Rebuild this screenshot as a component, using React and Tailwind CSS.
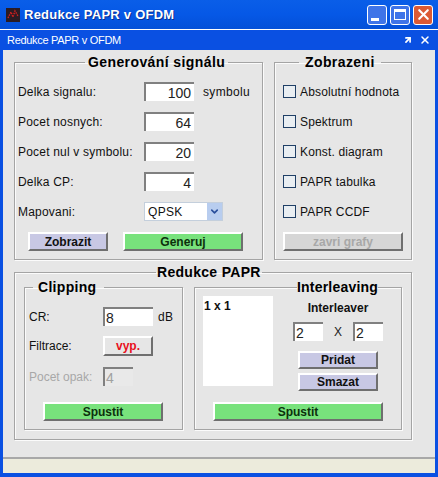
import { ArrowUpRight, ChevronDown, X } from "lucide-react";

const SANS = { fontFamily: '"Liberation Sans", Arial, sans-serif' };

function Group({ title, legendClass = "", className = "", children }) {
  return (
    <fieldset
      className={`min-w-0 border border-[#a4a4a4] shadow-[inset_1px_1px_0_#fbfbfb,1px_1px_0_#fbfbfb] ${className}`}
    >
      <legend className={`text-[14px] font-bold text-black ${legendClass}`}>{title}</legend>
      {children}
    </fieldset>
  );
}

function Field({ value, left, disabled, className = "w-[50px]" }) {
  return (
    <div
      className={`flex h-[19px] items-center border-t-2 border-l-2 border-t-[#808080] border-l-[#808080] text-[14px] leading-none ${
        left ? "justify-start pl-px" : "justify-end pr-[3px]"
      } ${disabled ? "bg-[#e9e9e9] text-[#a0a0a0]" : "bg-white text-[#222]"} ${className}`}
    >
      {value}
    </div>
  );
}

function Btn({ children, className = "" }) {
  return (
    <button
      className={`flex items-center justify-center border-2 border-t-white border-l-white border-r-[#6f6f6f] border-b-[#6f6f6f] text-[12px] leading-none font-bold ${className}`}
    >
      {children}
    </button>
  );
}

function Row({ label, children }) {
  return (
    <div className="flex h-[19px] items-center">
      <span className="w-[126px] text-[12px] tracking-[0.2px] text-[#111]">{label}</span>
      {children}
    </div>
  );
}

function Check({ label }) {
  return (
    <div className="flex h-[19px] items-center gap-[4px]">
      <span className="h-[13px] w-[13px] border border-[#1f3f66] bg-[#e9eef2]" />
      <span className="text-[12px] tracking-[0.15px] text-[#111]">{label}</span>
    </div>
  );
}

function WinButton({ className = "", children }) {
  return (
    <div
      className={`flex h-[20px] w-[20px] items-center justify-center rounded-[3px] border border-white ${className}`}
    >
      {children}
    </div>
  );
}

export default function App() {
  return (
    <div
      className="flex h-[477px] w-[438px] flex-col overflow-hidden bg-[#0a50e2]"
      style={SANS}
    >
      {/* Title bar */}
      <div className="flex h-[29px] items-center bg-gradient-to-b from-[#0a5ee8] via-[#0658e6] to-[#0450d8] pr-[5px] pl-[6px]">
        <svg width="14" height="14" viewBox="0 0 14 14" className="mr-[4px]">
          <rect width="14" height="14" fill="#2a1c24" />
          <path d="M2 10 L5 4 L7 9 L9 3 L12 8" stroke="#d02020" strokeWidth="1.4" strokeDasharray="1.5 1" fill="none" />
        </svg>
        <span className="text-[13px] font-bold tracking-[0.25px] text-white [text-shadow:1px_1px_0_#0a2f90]">
          Redukce PAPR v OFDM
        </span>
        <div className="ml-auto flex gap-[3px]">
          <WinButton className="items-end bg-[#3f74e8] pb-[3px]">
            <div className="mr-[4px] h-[3px] w-[8px] bg-white" />
          </WinButton>
          <WinButton className="bg-[#3f74e8]">
            <div className="h-[11px] w-[12px] border border-t-[3px] border-white" />
          </WinButton>
          <WinButton className="bg-[#dc5a34]">
            <X size={17} strokeWidth={3} className="text-white" />
          </WinButton>
        </div>
      </div>

      <div className="h-[1px] bg-white" />

      {/* Inner frame header */}
      <div className="flex h-[20px] items-center bg-[#0a50e2] pr-[7px] pl-[7px] text-[11px] tracking-[-0.3px] text-white">
        <span>Redukce PAPR v OFDM</span>
        <ArrowUpRight size={10} strokeWidth={4} className="mr-[6px] ml-auto" />
        <X size={12} strokeWidth={3} />
      </div>

      {/* Content */}
      <div className="mx-[3px] flex flex-1 flex-col bg-[#e6e6e6] px-[11px] pt-[4px]">
        <div className="flex gap-[11px]">
          <Group
            title="Generování signálu"
            legendClass="ml-[67px] px-[3px] leading-[16px] tracking-[0.4px]"
            className="h-[206px] w-[249px] pl-[3px]"
          >
            <div className="flex flex-col gap-[11px] pt-[12px]">
              <Row label="Delka signalu:">
                <Field value="100" />
                <span className="ml-[9px] text-[12px] tracking-[0.35px] text-[#111]">symbolu</span>
              </Row>
              <Row label="Pocet nosnych:">
                <Field value="64" />
              </Row>
              <Row label="Pocet nul v symbolu:">
                <Field value="20" />
              </Row>
              <Row label="Delka CP:">
                <Field value="4" />
              </Row>
              <Row label="Mapovani:">
                <div className="flex h-[19px] w-[79px] items-center border border-[#c4cfdc] bg-white pl-[3px] text-[12px] tracking-[0.3px] text-[#111]">
                  QPSK
                  <div className="ml-auto flex h-full w-[15px] items-center justify-center bg-[#b8cdef]">
                    <ChevronDown size={11} strokeWidth={3.5} className="text-[#2a4f9c]" />
                  </div>
                </div>
              </Row>
            </div>
            <div className="mt-[11px] ml-[10px] flex gap-[15px]">
              <Btn className="h-[19px] w-[80px] bg-[#c8c8e4] text-[#111]">Zobrazit</Btn>
              <Btn className="h-[19px] w-[120px] bg-[#78e27c] text-[#0c300c]">Generuj</Btn>
            </div>
          </Group>

          <Group
            title="Zobrazeni"
            legendClass="ml-[16px] px-[6px] leading-[16px] tracking-[0.4px]"
            className="h-[206px] w-[138px] pl-[8px]"
          >
            <div className="flex flex-col gap-[11px] pt-[12px]">
              <Check label="Absolutní hodnota" />
              <Check label="Spektrum" />
              <Check label="Konst. diagram" />
              <Check label="PAPR tabulka" />
              <Check label="PAPR CCDF" />
            </div>
            <Btn className="mt-[11px] h-[19px] w-[120px] bg-[#d6d6d6] text-[#a8a8a8]">zavri grafy</Btn>
          </Group>
        </div>

        <Group
          title="Redukce PAPR"
          legendClass="ml-[132px] px-[1px] leading-[14px] tracking-[0.3px]"
          className="mt-[5px] h-[175px] w-[398px] px-[9px]"
        >
          <div className="flex gap-[11px]">
            <Group
              title="Clipping"
              legendClass="ml-[4px] pr-[8px] pl-[5px] leading-[16px] tracking-[0.3px]"
              className="h-[151px] w-[159px] pl-[4px]"
            >
              <div className="flex flex-col pt-[12px]">
                <div className="flex h-[19px] items-center">
                  <span className="w-[74px] text-[12px] text-[#111]">CR:</span>
                  <Field value="8" left />
                  <span className="ml-[5px] text-[12px] tracking-[0.35px] text-[#111]">dB</span>
                </div>
                <div className="mt-[10px] flex h-[20px] items-center">
                  <span className="w-[74px] text-[12px] text-[#111]">Filtrace:</span>
                  <Btn className="h-[20px] w-[50px] bg-[#e6e6e6] text-[#e8101c]">vyp.</Btn>
                </div>
                <div className="mt-[11px] flex h-[19px] items-center">
                  <span className="w-[74px] text-[12px] text-[#a8a8a8]">Pocet opak:</span>
                  <Field value="4" left disabled className="w-[30px]" />
                </div>
              </div>
              <Btn className="mt-[16px] ml-[14px] h-[19px] w-[120px] bg-[#78e27c] text-[#0c300c]">Spustit</Btn>
            </Group>

            <Group
              title="Interleaving"
              legendClass="ml-[94px] leading-[16px] tracking-[0.2px]"
              className="h-[151px] w-[208px] pl-[8px]"
            >
              <div className="flex gap-[20px] pt-px">
                <div className="h-[90px] w-[70px] bg-white pt-px pl-px text-[12px] font-bold text-[#111]">
                  1 x 1
                </div>
                <div className="flex w-[90px] flex-col items-center">
                  <span className="mt-[4px] h-[22px] text-[12px] leading-[16px] font-bold text-[#111]">
                    Interleaver
                  </span>
                  <div className="flex h-[19px] w-full items-center justify-between">
                    <Field value="2" left className="w-[30px]" />
                    <span className="text-[12px] text-[#222]">X</span>
                    <Field value="2" left className="w-[30px]" />
                  </div>
                  <Btn className="mt-[10px] h-[18px] w-[80px] bg-[#c8c8e4] text-[#111]">Pridat</Btn>
                  <Btn className="mt-[4px] h-[18px] w-[80px] bg-[#c8c8e4] text-[#111]">Smazat</Btn>
                </div>
              </div>
              <Btn className="mt-[11px] ml-[10px] h-[19px] w-[170px] bg-[#78e27c] text-[#0c300c]">Spustit</Btn>
            </Group>
          </div>
        </Group>

        {/* Status bar */}
        <div className="-mx-[11px] mt-auto h-[16px] border-t-2 border-t-[#a8a8a8] bg-[#ecebdc]" />
      </div>
      <div className="h-[4px] bg-[#0a50e2]" />
    </div>
  );
}
